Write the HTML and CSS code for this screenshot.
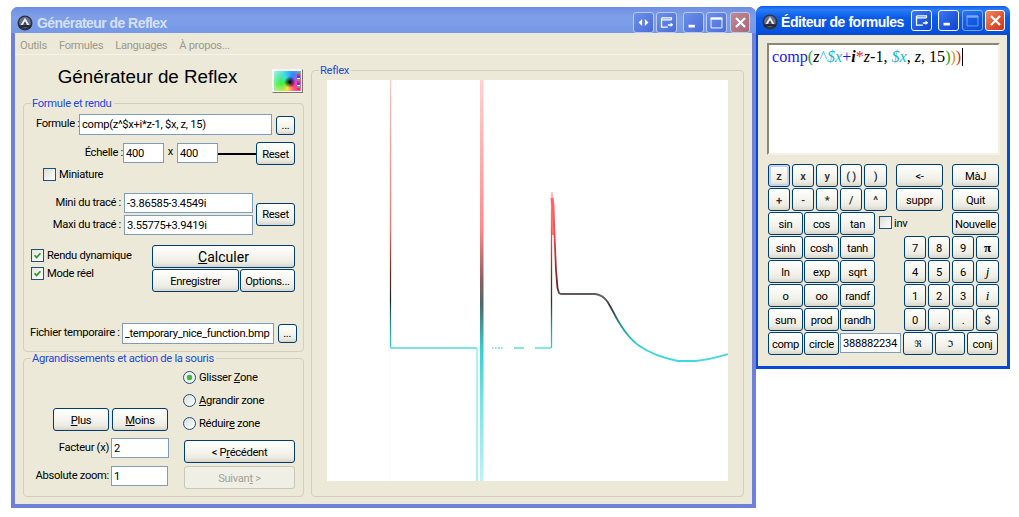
FILE: index.html
```html
<!DOCTYPE html>
<html lang="fr">
<head>
<meta charset="utf-8">
<title>Générateur de Reflex</title>
<link rel="stylesheet" href="styles.css">
</head>
<body>
<svg class="defs" width="0" height="0" aria-hidden="true">
  <defs>
    <symbol id="logo" viewBox="0 0 16 16">
      <circle cx="8" cy="8" r="7.5" fill="#2f333e"/>
      <circle cx="8" cy="7.500" r="5.800" fill="#66718c"/>
      <path d="M8 2.800 12.800 10.800H3.200Z" fill="#eef0f5"/>
      <path d="M8 6.200 10 9.800H6Z" fill="#3a3f4c"/>
      <path d="M1.500 10.500Q8 8.800 14.500 10.500L13.500 13Q8 11.300 2.500 13Z" fill="#262932"/>
    </symbol>
    <symbol id="ic-send" viewBox="0 0 21 21">
      <path d="M5 5.500H16V7.500M5 5.500V15.500H12M5 7.500H16" fill="none" stroke="#fff" stroke-width="1.400"/>
      <path d="M12 12.500H15V10.500L18 13 15 15.500V14H12Z" fill="#fff"/>
    </symbol>
    <symbol id="ic-arrows" viewBox="0 0 21 21">
      <path d="M9 6.500V14.500L5 10.500Z M12 6.500V14.500L16 10.500Z" fill="#fff"/>
    </symbol>
    <symbol id="ic-min" viewBox="0 0 21 21">
      <rect x="5" y="13" width="7" height="3" fill="#fff"/>
    </symbol>
    <symbol id="ic-max" viewBox="0 0 21 21">
      <path d="M4.500 5.500H16.500V16.500H4.500Z" fill="none" stroke="#fff"/>
      <rect x="4" y="5" width="13" height="2.400" fill="#fff"/>
    </symbol>
    <symbol id="ic-close" viewBox="0 0 21 21">
      <path d="M5.500 5.500 15.500 15.500M15.500 5.500 5.500 15.500" stroke="#fff" stroke-width="2.400" fill="none"/>
    </symbol>
  </defs>
</svg>

<section class="window main-window">
  <header class="titlebar main-titlebar">
    <svg class="logo"><use href="#logo"/></svg>
    <span class="win-title main-win-title">Générateur de Reflex</span>
    <div class="win-tools main-tools">
      <span class="tbtn"><svg><use href="#ic-arrows"/></svg></span>
      <span class="tbtn"><svg><use href="#ic-send"/></svg></span>
      <span class="tbtn tbtn-sep"><svg><use href="#ic-min"/></svg></span>
      <span class="tbtn"><svg><use href="#ic-max"/></svg></span>
      <span class="tbtn tbtn-close-off"><svg><use href="#ic-close"/></svg></span>
    </div>
  </header>
  <div class="client main-client">
    <nav class="menubar">
      <span>Outils</span><span>Formules</span><span>Languages</span><span>À propos...</span>
    </nav>
    <div class="main-content">
      <div class="left-col">
        <div class="head-row">
          <h1 class="app-title">Générateur de Reflex</h1>
          <div class="palette"><i class="palette-dots"></i></div>
        </div>

        <div class="group group-render">
          <span class="legend">Formule et rendu</span>
          <div class="row row-formula">
            <label class="lbl w43">Formule :</label>
            <input class="field w193 h21" value="comp(z^$x+i*z-1, $x, z, 15)">
            <button class="btn small-btn ml4 mt2">...</button>
          </div>
          <div class="row row-scale">
            <label class="lbl lbl-tall w43">Échelle :</label>
            <input class="field w41 h20 mt1" value="400">
            <span class="times">x</span>
            <input class="field w41 h20 mt1" value="400">
            <span class="link-line"></span>
            <button class="btn w39">Reset</button>
          </div>
          <div class="row row-mini">
            <span class="check"></span><span class="check-text">Miniature</span>
          </div>
          <div class="row row-range">
            <div class="range-fields">
              <div class="range-line"><label class="lbl w97">Mini du tracé :</label><input class="field w129 h20 ml3" value="-3.86585-3.4549i"></div>
              <div class="range-line"><label class="lbl w97">Maxi du tracé :</label><input class="field w129 h20 ml3" value="3.55775+3.9419i"></div>
            </div>
            <button class="btn w39 ml3">Reset</button>
          </div>
          <div class="row row-actions">
            <div class="options-col">
              <div class="opt"><span class="check on"><svg viewBox="0 0 13 13"><path d="M3 6.200 5.400 8.800 10 3.800" fill="none" stroke="#21a121" stroke-width="2"/></svg></span><span class="check-text">Rendu dynamique</span></div>
              <div class="opt"><span class="check on"><svg viewBox="0 0 13 13"><path d="M3 6.200 5.400 8.800 10 3.800" fill="none" stroke="#21a121" stroke-width="2"/></svg></span><span class="check-text">Mode réel</span></div>
            </div>
            <div class="actions-col">
              <button class="btn w143 big"><u>C</u>alculer</button>
              <div class="actions-sub">
                <button class="btn w87">Enregistrer</button>
                <button class="btn w55 ml1">Options...</button>
              </div>
            </div>
          </div>
          <div class="row row-temp">
            <label class="lbl">Fichier temporaire :</label>
            <input class="field w152 h21 ml2" value="_temporary_nice_function.bmp">
            <button class="btn small-btn ml4 mt1">...</button>
          </div>
        </div>

        <div class="group group-zoom">
          <span class="legend">Agrandissements et action de la souris</span>
          <div class="zoom-left">
            <div class="zoom-btns">
              <button class="btn w56"><u>P</u>lus</button>
              <button class="btn w56 ml3"><u>M</u>oins</button>
            </div>
            <div class="zoom-field zf1"><label class="lbl">Facteur (x)</label><input class="field w58 h20 ml2" value="2"></div>
            <div class="zoom-field zf2"><label class="lbl">Absolute zoom:</label><input class="field w57 h20 ml2" value="1"></div>
          </div>
          <div class="zoom-right">
            <div class="radio-row"><span class="radio on"></span><span class="radio-text">Glisser <u>Z</u>one</span></div>
            <div class="radio-row"><span class="radio"></span><span class="radio-text"><u>A</u>grandir zone</span></div>
            <div class="radio-row"><span class="radio"></span><span class="radio-text">Réduir<u>e</u> zone</span></div>
            <button class="btn w111 prev">&lt; P<u>r</u>écédent</button>
            <button class="btn w111 next" disabled>Suivan<u>t</u> &gt;</button>
          </div>
        </div>
      </div>

      <div class="group group-reflex">
        <span class="legend">Reflex</span>
        <svg class="plot" viewBox="0 0 401 401" width="401" height="401">
          <defs>
            <linearGradient id="g1" gradientUnits="userSpaceOnUse" x1="0" y1="0" x2="0" y2="268">
              <stop offset="0" stop-color="#ffc4c4"/><stop offset=".55" stop-color="#ff6a6a"/>
              <stop offset=".72" stop-color="#7a2222"/><stop offset=".82" stop-color="#182828"/>
              <stop offset=".92" stop-color="#1d9c9c"/><stop offset="1" stop-color="#2fd0d0"/>
            </linearGradient>
            <linearGradient id="g2" gradientUnits="userSpaceOnUse" x1="0" y1="0" x2="0" y2="401">
              <stop offset="0" stop-color="#ffd2d2"/><stop offset=".37" stop-color="#ff8a8a"/>
              <stop offset=".5" stop-color="#8a6060"/><stop offset=".56" stop-color="#4c6a6a"/>
              <stop offset=".67" stop-color="#3ccccc"/><stop offset=".8" stop-color="#78e2e2"/>
              <stop offset="1" stop-color="#c0f2f2"/>
            </linearGradient>
            <linearGradient id="g3" gradientUnits="userSpaceOnUse" x1="0" y1="112" x2="0" y2="268">
              <stop offset="0" stop-color="#ffc4c4"/><stop offset=".25" stop-color="#ff5050"/>
              <stop offset=".55" stop-color="#7a2222"/><stop offset=".7" stop-color="#303030"/>
              <stop offset=".87" stop-color="#1d9c9c"/><stop offset="1" stop-color="#2fd0d0"/>
            </linearGradient>
            <linearGradient id="g4" gradientUnits="userSpaceOnUse" x1="0" y1="112" x2="0" y2="285">
              <stop offset="0" stop-color="#ffc4c4"/><stop offset=".2" stop-color="#ff4a4a"/>
              <stop offset=".55" stop-color="#6a2020"/><stop offset=".6" stop-color="#666"/>
              <stop offset=".66" stop-color="#333"/><stop offset=".76" stop-color="#1f8c8c"/>
              <stop offset=".88" stop-color="#34d0d0"/><stop offset="1" stop-color="#44dcdc"/>
            </linearGradient>
          </defs>
          <path d="M63.500 0V268" stroke="url(#g1)" stroke-width="1.200" fill="none"/>
          <path d="M63 268H150" stroke="#4fdcdc" stroke-width="1.300" fill="none"/>
          <path d="M150 268V401" stroke="#8ee6e6" stroke-width="1.300" fill="none"/>
          <path d="M63 268V401" stroke="#fafafa" stroke-width="1" fill="none"/>
          <rect x="153" y="0" width="3.500" height="401" fill="url(#g2)"/>
          <path d="M165 268h1.500M168 268h1.500M171 268h2M174 268h1.500M187 268h10M208 268h16" stroke="#5fdede" stroke-width="1.300" fill="none"/>
          <path d="M224.500 112V268" stroke="url(#g3)" stroke-width="1.300" fill="none"/>
          <path d="M225 112 226 125 227.500 155 229 190 230.500 208 232 213 234 214H268C273 214.500 277 217 280 221 284 227 288 236 293 244 298 252 303 259 311 265 321 272 335 278 351 281H368C380 280 391 277 401 274" stroke="url(#g4)" stroke-width="1.800" fill="none"/>
          <path d="M225 118 226 126 226.500 155" stroke="#ff4a4a" stroke-opacity=".7" stroke-width="3.200" fill="none"/>
        </svg>
      </div>
    </div>
  </div>
</section>

<section class="window editor-window">
  <header class="titlebar editor-titlebar">
    <svg class="logo"><use href="#logo"/></svg>
    <span class="win-title editor-win-title">Éditeur de formules</span>
    <div class="win-tools editor-tools">
      <span class="tbtn active"><svg><use href="#ic-send"/></svg></span>
      <span class="tbtn active tbtn-sep2"><svg><use href="#ic-min"/></svg></span>
      <span class="tbtn active dim"><svg><use href="#ic-max"/></svg></span>
      <span class="tbtn tbtn-close"><svg><use href="#ic-close"/></svg></span>
    </div>
  </header>
  <div class="client editor-client">
    <div class="editor-box"><span class="c-blue">comp</span><span class="c-green">(</span><i>z</i><span class="c-cyan">^</span><i class="c-cyan">$x</i><span class="c-blue">+</span><b><i>i</i></b><span class="c-red">*</span><i>z</i>-1, <i class="c-cyan">$x</i>, <i>z</i>, 15<span class="c-green">)</span><span class="c-orange">)</span><span class="c-red">)</span><span class="caret"></span></div>
    <div class="keys">
      <div class="key-row">
        <button class="btn k22 focus bold">z</button><button class="btn k22 ml2 bold">x</button><button class="btn k22 ml2 bold">y</button><button class="btn k22 ml2 bold">( )</button><button class="btn k23 ml2 bold">)</button>
        <button class="btn k47 ml9">&lt;-</button><button class="btn k47 ml9">MàJ</button>
      </div>
      <div class="key-row">
        <button class="btn k22 bold">+</button><button class="btn k22 ml2 bold">-</button><button class="btn k22 ml2 bold">*</button><button class="btn k22 ml2 bold">/</button><button class="btn k23 ml2 bold">^</button>
        <button class="btn k47 ml9">suppr</button><button class="btn k47 ml9">Quit</button>
      </div>
      <div class="key-row">
        <button class="btn k35">sin</button><button class="btn k35 ml1">cos</button><button class="btn k35 ml1">tan</button>
        <span class="check inv-check"></span><span class="check-text inv-text">inv</span>
        <button class="btn k47 push-right">Nouvelle</button>
      </div>
      <div class="key-row">
        <button class="btn k35">sinh</button><button class="btn k35 ml1">cosh</button><button class="btn k35 ml1">tanh</button>
        <button class="btn k22 pad-start">7</button><button class="btn k22 ml2">8</button><button class="btn k22 ml2">9</button><button class="btn k23 ml2 serif"><b>π</b></button>
      </div>
      <div class="key-row">
        <button class="btn k35">ln</button><button class="btn k35 ml1">exp</button><button class="btn k35 ml1">sqrt</button>
        <button class="btn k22 pad-start">4</button><button class="btn k22 ml2">5</button><button class="btn k22 ml2">6</button><button class="btn k23 ml2 serif"><i>j</i></button>
      </div>
      <div class="key-row">
        <button class="btn k35">o</button><button class="btn k35 ml1">oo</button><button class="btn k35 ml1">randf</button>
        <button class="btn k22 pad-start">1</button><button class="btn k22 ml2">2</button><button class="btn k22 ml2">3</button><button class="btn k23 ml2 serif"><i>i</i></button>
      </div>
      <div class="key-row">
        <button class="btn k35">sum</button><button class="btn k35 ml1">prod</button><button class="btn k35 ml1">randh</button>
        <button class="btn k22 pad-start">0</button><button class="btn k22 ml2">.</button><button class="btn k22 ml2">.</button><button class="btn k23 ml2 bold">$</button>
      </div>
      <div class="key-row">
        <button class="btn k35">comp</button><button class="btn k35 ml1">circle</button>
        <input class="field seed ml1" value="388882234">
        <button class="btn k30 ml2 glyph">ℜ</button><button class="btn k30 ml2 glyph">ℑ</button><button class="btn k31 ml2">conj</button>
      </div>
    </div>
  </div>
</section>
</body>
</html>
```
FILE: styles.css
```css
* { box-sizing: border-box; }
html, body { margin: 0; height: 100%; }
body {
  background: #fff;
  font: 11.2px Roboto, "Liberation Sans", Arial, sans-serif;
  letter-spacing: -.3px;
  color: #000;
  overflow: hidden;
}
.defs { position: absolute; }
u { text-decoration: underline; }

/* windows on the desktop */
.window { position: absolute; display: flex; flex-direction: column; border-radius: 7px 7px 0 0; }
.main-window { left: 11px; top: 7px; width: 745px; height: 501px; background: #6f80d8; padding: 0 4px 4px; }
.editor-window { left: 756px; top: 6px; width: 254px; height: 363px; background: #0748d8; padding: 0 3px 3px 2px; }

.titlebar { display: flex; align-items: center; flex: none; position: relative; }
.main-titlebar {
  height: 26px; margin: 0 -4px; padding: 5px 6px 0 6px;
  border-radius: 7px 7px 0 0;
  background: linear-gradient(#6e8fe2 0, #7f9fe8 40%, #7699e6 100%);
}
.editor-titlebar {
  height: 29px; margin: 0 -3px 0 -2px; padding: 3px 5px 0 6px;
  border-radius: 7px 7px 0 0;
  background: linear-gradient(#0a5ce8 0, #2a7cf6 12%, #0a5ce8 40%, #0653e0 85%, #0a4bd2 100%);
}
.logo { width: 16px; height: 16px; flex: none; }
.win-title { font-family: "Liberation Sans", Arial, sans-serif; font-weight: bold; white-space: nowrap; }
.main-win-title { color: #d5e0f6; margin-left: 4px; font-size: 14px; letter-spacing: -.55px; }
.editor-win-title { color: #fff; margin-left: 3px; font-size: 14px; letter-spacing: -.45px; }
.win-tools { margin-left: auto; display: flex; }
.main-tools { margin-top: -1px; }
.editor-tools { margin-top: -3px; }
.tbtn {
  width: 21px; height: 21px; margin-left: 2px; flex: none; display: block;
  border: 1px solid #b9c9f2; border-radius: 3px;
  background: linear-gradient(135deg, #6c90ea, #5478de 70%, #4a6ed6);
}
.tbtn svg { width: 19px; height: 19px; display: block; }
.tbtn-sep { margin-left: 6px; }
.tbtn-close-off { background: linear-gradient(135deg, #c08892, #a86878); width: 20px; margin-left: 3px; }
.tbtn.active { border-color: #fff; background: linear-gradient(135deg, #3c78f0, #1a52d8 70%, #1446c8); }
.tbtn.dim { opacity: .45; margin-left: 3px; }
.tbtn-sep2 { margin-left: 6px; }
.tbtn-close { border-color: #fff; background: linear-gradient(135deg, #ee8a5e, #d8482a 70%, #c03a1e); width: 20px; margin-left: 2px; }

.client { background: #ece9d8; flex: 1; min-height: 0; }
.main-client { display: flex; flex-direction: column; }
.menubar {
  height: 22px; flex: none; display: flex; gap: 12px; align-items: center;
  padding: 3px 0 0 5px; color: #9d9a8c; border-bottom: 1px solid #f6f4ea;
}
.main-content { flex: 1; display: flex; padding-left: 8px; min-height: 0; }

/* left column */
.left-col { width: 281px; flex: none; }
.head-row { height: 48px; display: flex; padding-top: 14px; }
.app-title { width: 249px; margin: 0; font: normal 18.8px/16px "Liberation Sans", Arial, sans-serif; letter-spacing: 0; text-align: center; }
.palette {
  width: 31px; height: 24px; flex: none; position: relative;
  border: 1px solid; border-color: #f8f8f2 #7a7868 #7a7868 #f8f8f2;
  box-shadow: inset 0 0 0 1px #fff;
  background:
    radial-gradient(circle at 58% 55%, #000 0, rgba(0,0,0,0) 28%),
    radial-gradient(circle at 58% 55%, rgba(255,255,255,0) 45%, rgba(255,255,255,.6) 100%),
    conic-gradient(from 20deg at 58% 55%, #2a8aff, #e040e0, #ff4090, #ffe040, #40f040, #40e0e0, #2a8aff);
}
.palette-dots {
  position: absolute; right: 2px; top: 2px; bottom: 2px; width: 3px;
  background: repeating-linear-gradient(#2c4 0 2px, #e33 2px 4px, #44e 4px 6px, #fff 6px 7px);
}

.group { position: relative; border: 1px solid #d0d0bf; border-radius: 4px; }
.legend {
  position: absolute; top: -7px; left: 7px; padding: 0 2px 0 1px;
  background: #ece9d8; color: #1c4adf; line-height: 14px; white-space: nowrap;
}
.group-render { height: 249px; margin-bottom: 6px; }
.group-zoom { height: 139px; display: flex; }
.group-reflex { width: 433px; height: 427px; margin: 15px 0 0 7px; padding: 9px 0 0 15px; }
.plot { display: block; background: #fff; }

.row { display: flex; }
.row-formula { margin: 10px 0 0 12px; height: 21px; }
.row-scale { margin: 7px 0 0 56px; height: 23px; }
.row-mini { margin: 3px 0 0 19px; height: 13px; align-items: center; }
.row-range { margin: 12px 0 0; height: 42px; align-items: center; }
.row-actions { margin: 10px 0 0 7px; height: 47px; }
.row-temp { margin: 31px 0 0 6px; height: 21px; }

.range-fields { display: flex; flex-direction: column; gap: 2px; }
.range-line { display: flex; align-items: center; }
.options-col { width: 121px; padding-top: 4px; flex: none; }
.opt { display: flex; align-items: center; height: 13px; margin-bottom: 5px; }
.actions-sub { display: flex; margin-top: 1px; }

.lbl { white-space: nowrap; text-align: right; flex: none; line-height: 20px; }
.lbl-tall { line-height: 22px; }
.w43 { width: 43px; }
.w97 { width: 97px; }
.field {
  display: block; flex: none; padding: 0 0 0 2px;
  border: 1px solid #7f9db9; background: #fff; color: #000;
  font: inherit; letter-spacing: inherit; outline: 0;
}
.h20 { height: 20px; }
.h21 { height: 21px; }
.w41 { width: 41px; }
.w57 { width: 57px; }
.w58 { width: 58px; }
.w129 { width: 129px; }
.w152 { width: 152px; }
.w193 { width: 193px; }
.ml1 { margin-left: 1px; }
.ml2 { margin-left: 2px; }
.ml3 { margin-left: 3px; }
.ml4 { margin-left: 4px; }
.ml9 { margin-left: 9px; }
.mt1 { margin-top: 1px; }
.mt2 { margin-top: 2px; }
.times { width: 13px; text-align: center; line-height: 20px; flex: none; }
.link-line { width: 38px; height: 2px; margin-top: 11px; background: #000; flex: none; }

.btn {
  display: block; flex: none; height: 23px; padding: 1px 0 0;
  border: 1px solid #003c74; border-radius: 3px;
  background: linear-gradient(#fff 0, #f6f5ef 45%, #ecebe3 80%, #d8d4c6 100%);
  font: inherit; letter-spacing: inherit; color: #000; white-space: nowrap; text-align: center;
}
.btn:disabled { border-color: #c9c7ba; background: #f0efe6; color: #a3a194; }
.btn.big { font-size: 14px; letter-spacing: 0; padding: 0; }
.small-btn { width: 19px; height: 19px; line-height: 12px; }
.w39 { width: 39px; }
.w55 { width: 55px; }
.w56 { width: 56px; }
.w87 { width: 87px; }
.w111 { width: 111px; }
.w143 { width: 143px; }

.check {
  display: block; width: 13px; height: 13px; flex: none;
  border: 1px solid #1c5180; background: linear-gradient(135deg, #dcdcd7, #fff);
}
.check.on { background: linear-gradient(135deg, #e4e4de, #fff); }
.check svg { display: block; width: 11px; height: 11px; }
.check-text { margin: 0 0 0 3px; white-space: nowrap; }

/* zoom group */
.zoom-left { width: 159px; flex: none; padding: 49px 0 0 29px; }
.zoom-btns { display: flex; margin-bottom: 7px; }
.zoom-field { display: flex; justify-content: flex-end; margin-bottom: 8px; height: 20px; }
.zf1 { width: 116px; }
.zf2 { width: 115px; }
.zoom-right { padding-top: 12px; }
.radio-row { display: flex; align-items: center; height: 13px; margin-bottom: 10px; white-space: nowrap; }
.radio-text { margin-bottom: 0; }
.radio {
  width: 13px; height: 13px; margin-right: 3px; border-radius: 50%; flex: none;
  border: 1px solid #1c5180; background: linear-gradient(135deg, #dcdcd7, #fff);
}
.radio.on { background: radial-gradient(circle, #3fb93f 0 2.5px, #f4f4ee 3.2px); }
.prev { margin: 6px 0 3px 1px; }
.next { margin-left: 1px; }

/* editor */
.editor-client { padding: 8px 0 0 9px; }
.editor-box {
  width: 233px; height: 112px; padding: 2px 4px 0 3px; background: #fff;
  border: 2px solid; border-color: #8a8878 #f4f2e6 #f4f2e6 #8a8878;
  font: 16.100px/19px "Liberation Serif", "Times New Roman", serif; letter-spacing: 0; white-space: nowrap;
}
.caret { display: inline-block; width: 1px; height: 18px; background: #000; vertical-align: -4px; margin-left: 1px; }
.c-blue { color: #1a1aff; }
.c-green { color: #1aa01a; }
.c-cyan { color: #23b4d8; }
.c-red { color: #ee2222; }
.c-orange { color: #ee8822; }
.keys { margin: 9px 0 0 1px; width: 231px; }
.key-row { display: flex; height: 24px; align-items: flex-start; }
.k22 { width: 22px; }
.k23 { width: 23px; }
.k30 { width: 30px; }
.k31 { width: 31px; }
.k35 { width: 35px; }
.k47 { width: 47px; }
.bold { font-weight: 500; color: #2c2c2c; }
.serif { font-family: "Liberation Serif", serif; font-size: 13px; }
.glyph { font: 9px "DejaVu Sans", sans-serif; }
.focus { box-shadow: inset 0 0 0 2px #c2d2f0; }
.pad-start { margin-left: 29px; }
.push-right { margin-left: auto; }
.inv-check { margin: 4px 0 0 4px; }
.inv-text { margin: 5px 0 0 2px; }
.seed { width: 61px; height: 20px; margin-top: 1px; }
```
